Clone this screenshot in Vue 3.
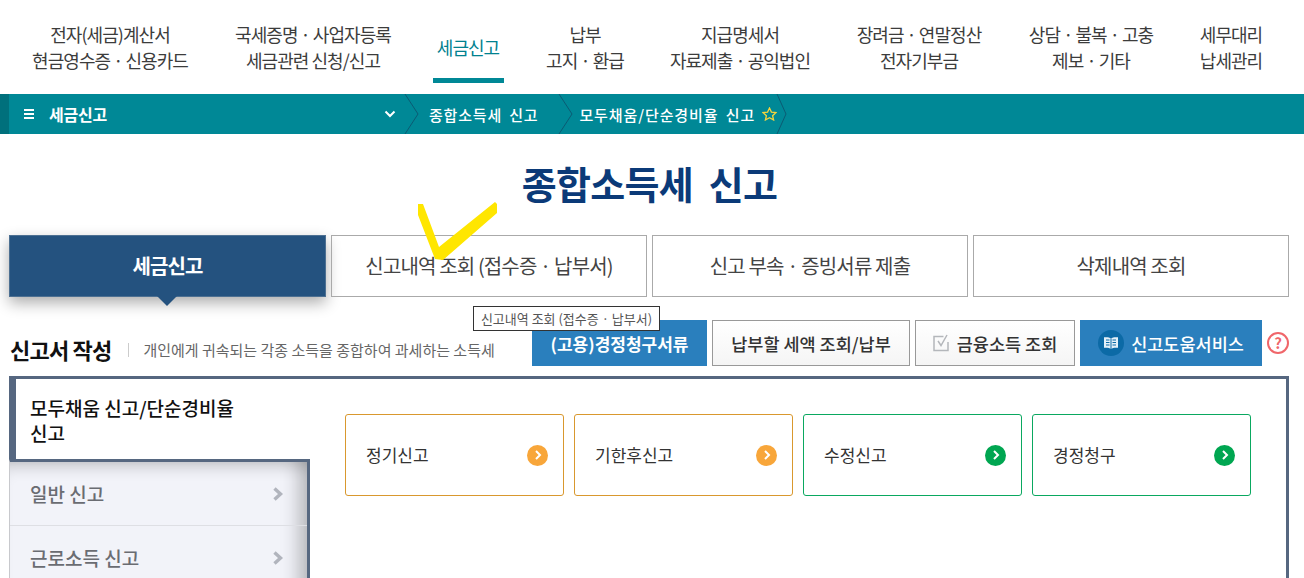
<script setup>
const nav = [
  { lines: ['전자(세금)계산서', '현금영수증 · 신용카드'], w: 220 },
  { lines: ['국세증명 · 사업자등록', '세금관련 신청/신고'], w: 186 },
  { lines: ['세금신고'], w: 124, active: true },
  { lines: ['납부', '고지 · 환급'], w: 110 },
  { lines: ['지급명세서', '자료제출 · 공익법인'], w: 200 },
  { lines: ['장려금 · 연말정산', '전자기부금'], w: 158 },
  { lines: ['상담 · 불복 · 고충', '제보 · 기타'], w: 186 },
  { lines: ['세무대리', '납세관리'], w: 94 }
]
const tabs = ['세금신고', '신고내역 조회 (접수증 · 납부서)', '신고 부속 · 증빙서류 제출', '삭제내역 조회']
const cards = [
  { t: '정기신고', c: 'orange' },
  { t: '기한후신고', c: 'orange' },
  { t: '수정신고', c: 'green' },
  { t: '경정청구', c: 'green' }
]
</script>

<template>
  <div class="page">
    <nav class="topnav">
      <a v-for="n in nav" :key="n.lines[0]" class="navitem" :class="{ active: n.active }" :style="{ width: n.w + 'px' }">
        <span class="navlabel" v-if="n.active">{{ n.lines[0] }}<i class="underline"></i></span>
        <template v-else><span v-for="l in n.lines" :key="l">{{ l }}</span></template>
      </a>
    </nav>

    <div class="crumbs">
      <div class="crumb home">
        <span class="burger"><i></i><i></i><i></i></span>
        <span class="crumbmain">세금신고</span>
        <svg class="chev" width="12" height="8" viewBox="0 0 12 8"><path d="M1.500 1.500 6 6l4.500-4.500" fill="none" stroke="#fff" stroke-width="2"/></svg>
      </div>
      <svg class="sep" width="16" height="40" viewBox="0 0 16 40"><path d="M1 0 14 20 1 40" fill="none" stroke="#0b5b73" stroke-width="1"/></svg>
      <div class="crumb second">종합소득세 신고</div>
      <svg class="sep" width="16" height="40" viewBox="0 0 16 40"><path d="M1 0 14 20 1 40" fill="none" stroke="#0b5b73" stroke-width="1"/></svg>
      <div class="crumb third">모두채움/단순경비율 신고</div>
      <svg class="star" width="15" height="14" viewBox="0 0 15 14"><path d="M7.500 1 9.400 5.100 14 5.600 10.600 8.700 11.600 13 7.500 10.800 3.400 13 4.400 8.700 1 5.600 5.600 5.100Z" fill="none" stroke="#f4d43c" stroke-width="1.300"/></svg>
      <svg class="sep tight" width="12" height="40" viewBox="0 0 12 40"><path d="M1 0 10 20 1 40" fill="none" stroke="#0b5b73" stroke-width="1"/></svg>
    </div>

    <h1 class="title">종합소득세 신고</h1>

    <div class="tabs">
      <div v-for="(t, i) in tabs" :key="t" class="tab" :class="{ on: i === 0 }">{{ t }}</div>
    </div>

    <div class="toolbar">
      <div class="heading">
        <strong>신고서 작성</strong>
        <span class="desc">개인에게 귀속되는 각종 소득을 종합하여 과세하는 소득세</span>
      </div>
      <div class="btns">
        <a class="btn blue claim">(고용)경정청구서류</a>
        <a class="btn plain pay">납부할 세액 조회/납부</a>
        <a class="btn plain fin">
          <svg width="17" height="18" viewBox="0 0 17 18"><path d="M10.500 2.500H1v14h14V8" fill="none" stroke="#b4b7bb" stroke-width="1.500"/><path d="M5 7 8 11.500 14 1" fill="none" stroke="#b4b7bb" stroke-width="1.500"/></svg>
          금융소득 조회
        </a>
        <a class="btn blue help">
          <span class="bookwrap">
            <svg width="16" height="14" viewBox="0 0 16 14"><path d="M8 2.500C6.500 1.300 4 1 1 1.300v10.500c3-.3 5.500 0 7 1.200 1.500-1.200 4-1.500 7-1.200V1.300C12 1 9.500 1.300 8 2.500Z" fill="#e4f0f8"/><path d="M8 2.500V13M3 4h3.500M3 6.500h3.500M3 9h3.500M9.500 4H13M9.500 6.500H13M9.500 9H13" stroke="#0c6aa6" stroke-width="1" fill="none"/></svg>
          </span>
          신고도움서비스
        </a>
        <span class="q">?</span>
      </div>
    </div>

    <section class="frame">
      <aside class="side">
        <div class="sidehead">모두채움 신고/단순경비율<br>신고</div>
        <ul class="sidelist">
          <li>일반 신고<svg width="12" height="14" viewBox="0 0 12 14"><path d="M2.500 1.500 8.500 7l-6 5.500" fill="none" stroke="#b1b4bd" stroke-width="3.400"/></svg></li>
          <li>근로소득 신고<svg width="12" height="14" viewBox="0 0 12 14"><path d="M2.500 1.500 8.500 7l-6 5.500" fill="none" stroke="#b1b4bd" stroke-width="3.400"/></svg></li>
        </ul>
      </aside>
      <div class="cards">
        <a v-for="c in cards" :key="c.t" class="card" :class="c.c">
          <span>{{ c.t }}</span>
          <i class="go"><svg width="10" height="12" viewBox="0 0 10 12"><path d="M3 2l4 4-4 4" fill="none" stroke="#fff" stroke-width="2"/></svg></i>
        </a>
      </div>
    </section>

    <svg class="tick" width="82" height="60" viewBox="0 0 82 60"><path d="M1 3 6 3 22 46 78 1 80 3 80 12 26 59 18 58 1 14Z" fill="#ffe600"/></svg>
    <div class="tooltip">신고내역 조회 (접수증 · 납부서)</div>
  </div>
</template>

<style>
html, body { margin: 0; background: #fff; overflow: hidden; }
</style>

<style scoped>
.page {
  position: relative;
  width: 1304px;
  height: 578px;
  overflow: hidden;
  font-family: "Noto Sans CJK KR", "Noto Sans", sans-serif;
  color: #333;
}
.topnav {
  display: flex;
  height: 94px;
}
.navitem {
  display: flex;
  flex-direction: column;
  align-items: center;
  padding-top: 21px;
  box-sizing: border-box;
  font-size: 18px;
  line-height: 26px;
  letter-spacing: -.95px;
  color: #3c3c3c;
  white-space: nowrap;
}
.navitem.active { color: #00818f; padding-top: 0; }
.navlabel {
  display: flex;
  flex-direction: column;
  align-items: center;
  height: 94px;
  box-sizing: border-box;
  padding: 34px 5px 0;
  position: relative;
  width: 71px;
}
.underline {
  position: absolute;
  left: 0;
  right: 0;
  bottom: 11px;
  height: 5px;
  background: #008896;
}
.crumbs {
  display: flex;
  align-items: center;
  height: 40px;
  background: #008896;
  border-left: 9px solid #00707c;
  color: #fff;
  font-size: 15px;
  font-weight: 500;
  letter-spacing: .8px;
  word-spacing: 3px;
  box-sizing: border-box;
}
.crumb { white-space: nowrap; }
.home {
  display: flex;
  align-items: center;
  width: 395px;
  padding-left: 15px;
  box-sizing: border-box;
}
.burger {
  display: flex;
  flex-direction: column;
  gap: 2px;
  width: 10px;
  margin-right: 15px;
}
.burger i { display: block; height: 2px; background: #fff; }
.crumbmain { flex: 1; font-weight: 700; font-size: 16px; letter-spacing: -.2px; }
.chev { margin-right: 8px; }
.sep { flex: none; }
.second { margin: 0 20px 0 9px; }
.third { margin-left: 5px; margin-right: 7px; letter-spacing: .9px; }
.tight { margin-left: -1px; }
.star { flex: none; }
.title {
  margin: 25px 0 0;
  height: 76px;
  padding-right: 5px;
  font-size: 38px;
  line-height: 48px;
  font-weight: 700;
  color: #0b3a78;
  text-align: center;
  letter-spacing: -.7px;
  word-spacing: 8px;
  box-sizing: border-box;
}
.tabs {
  display: flex;
  gap: 5px;
  margin-left: 9px;
  width: 1280px;
}
.tab {
  position: relative;
  flex: 1;
  height: 62px;
  box-sizing: border-box;
  border: 1px solid #aaa;
  display: flex;
  align-items: center;
  justify-content: center;
  padding-bottom: 2px;
  font-size: 20px;
  letter-spacing: -.85px;
  color: #444;
}
.tab.on {
  flex: 0 0 317px;
  background: #24527f;
  border-color: #4d7092;
  color: #fff;
  font-weight: 700;
  box-shadow: 0 6px 14px rgba(0, 0, 0, .32);
}
.tab.on::after {
  content: "";
  position: absolute;
  left: 147px;
  top: 60px;
  border: 10px solid transparent;
  border-bottom: 0;
  border-top-color: #24527f;
}
.toolbar {
  display: flex;
  justify-content: space-between;
  align-items: flex-end;
  margin: 23px 15px 0 10px;
  height: 46px;
}
.heading { display: flex; align-items: center; padding-bottom: 1px; }
.heading strong {
  font-size: 22px;
  line-height: 32px;
  color: #111;
  letter-spacing: -.8px;
  font-weight: 700;
}
.desc {
  position: relative;
  margin-left: 17px;
  padding-left: 15px;
  font-size: 15px;
  color: #666;
}
.desc::before {
  content: "";
  position: absolute;
  left: 0;
  top: 4px;
  height: 14px;
  width: 1px;
  background: #ccc;
}
.btns { display: flex; align-items: center; gap: 5px; }
.btn {
  height: 46px;
  box-sizing: border-box;
  display: flex;
  align-items: center;
  justify-content: center;
  gap: 7px;
  font-size: 17.500px;
  font-weight: 500;
  white-space: nowrap;
}
.blue { background: #2a7fbd; color: #fff; }
.btn.claim { width: 175px; font-weight: 700; font-size: 17px; }
.plain {
  border: 1px solid #999;
  background: linear-gradient(#fff, #f5f5f5);
  color: #333;
}
.pay { width: 198px; }
.fin { width: 160px; }
.help { width: 182px; }
.bookwrap {
  display: flex;
  align-items: center;
  justify-content: center;
  width: 26px;
  height: 26px;
  border-radius: 50%;
  background: #0c6aa6;
}
.q {
  width: 22px;
  height: 22px;
  box-sizing: border-box;
  border: 2px solid #f0666a;
  border-radius: 50%;
  color: #f0666a;
  font-size: 15px;
  font-weight: 700;
  line-height: 18px;
  text-align: center;
}
.frame {
  display: flex;
  margin: 10px 15px 0 9px;
  height: 260px;
  border: 3px solid #566780;
  border-bottom: 0;
  box-sizing: border-box;
}
.side { flex: none; width: 298px; }
.sidehead {
  height: 80px;
  box-sizing: border-box;
  border-left: 4px solid #566780;
  padding: 16px 0 0 14px;
  font-size: 19px;
  line-height: 25px;
  font-weight: 500;
  color: #111;
  white-space: nowrap;
}
.sidelist {
  list-style: none;
  margin: 0 0 0 -3px;
  padding: 0;
  height: 200px;
  box-sizing: border-box;
  border-top: 3px solid #566780;
  border-right: 3px solid #566780;
  border-left: 1px solid #c8c9cd;
  background: #f2f3f9;
  box-shadow: inset -20px 0 18px -12px rgba(0, 0, 0, .25), inset 0 16px 16px -12px rgba(0, 0, 0, .2);
}
.sidelist li {
  display: flex;
  align-items: center;
  justify-content: space-between;
  height: 64px;
  box-sizing: border-box;
  padding: 0 23px 0 20px;
  font-size: 19px;
  font-weight: 500;
  color: #6a6c72;
  border-bottom: 1px solid #dedfe4;
}
.cards {
  display: flex;
  gap: 10px;
  margin: 35px 0 0 35px;
}
.card {
  width: 219px;
  height: 82px;
  box-sizing: border-box;
  border: 1px solid;
  border-radius: 3px;
  display: flex;
  align-items: center;
  justify-content: space-between;
  padding: 0 15px 2px 20px;
  font-size: 17px;
  color: #333;
}
.orange { border-color: #d9982e; }
.green { border-color: #0aa860; }
.go {
  width: 21px;
  height: 21px;
  margin-top: 2px;
  border-radius: 50%;
  display: flex;
  align-items: center;
  justify-content: center;
}
.orange .go { background: #f8a63a; }
.green .go { background: #00a651; }
.tick {
  position: absolute;
  left: 417px;
  top: 201px;
}
.tooltip {
  position: absolute;
  left: 473px;
  top: 306px;
  width: 187px;
  height: 25px;
  box-sizing: border-box;
  border: 1px solid #333;
  background: #fff;
  font-size: 13px;
  line-height: 23px;
  text-align: center;
  color: #555;
  white-space: nowrap;
}
</style>
